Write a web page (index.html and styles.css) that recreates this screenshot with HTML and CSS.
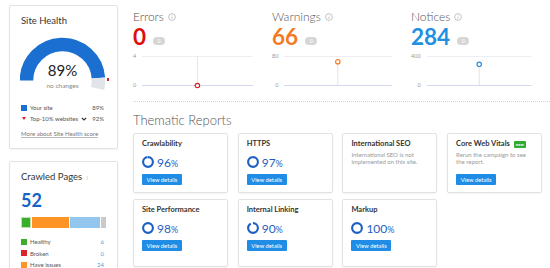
FILE: index.html
```html
<!DOCTYPE html>
<html lang="en">
<head>
  <meta charset="UTF-8" />
  <title>Site Audit Overview</title>
  <link rel="stylesheet" href="styles.css">
</head>
<body>
  <div class="page">
    <!-- Left column: health + crawled pages -->
    <aside class="side">
      <section class="panel health">
        <h2 class="panel-title">Site Health</h2>
        <div class="gauge">
          <svg class="gauge-svg" width="97" height="56">
            <path d="M 6.5 44.5 A 36 36 0 0 1 78.41 41.99" fill="none" stroke="#1a6fd0" stroke-width="13.5"/>
            <path d="M 78.41 41.99 A 36 36 0 0 1 77.58 52.6" fill="none" stroke="#e1e4e8" stroke-width="13.5"/>
            <rect x="87" y="42" width="2" height="3" fill="#e0202a"/>
          </svg>
          <div class="gauge-label">
            <div class="gauge-value">89%</div>
            <div class="gauge-note">no changes</div>
          </div>
        </div>
        <ul class="legend">
          <li><span class="swatch swatch-blue"></span><span>Your site</span><span class="legend-val">89%</span></li>
          <li>
            <span class="tri"></span><span>Top-10% websites</span>
            <svg class="chev" width="6" height="4" viewBox="0 0 6 4"><path d="M0.8 0.8 L3 3 L5.2 0.8" fill="none" stroke="#333" stroke-width="1.2"/></svg>
            <span class="legend-val">92%</span>
          </li>
        </ul>
        <a class="more-link" href="#">More about Site Health score</a>
      </section>

      <section class="panel crawled">
        <h2 class="panel-title">Crawled Pages <span class="tiny-i">i</span></h2>
        <div class="crawled-total">52</div>
        <div class="pages-bar">
          <span class="seg seg-green" style="width: 10px"></span>
          <span class="seg seg-orange" style="width: 38px"></span>
          <span class="seg seg-light" style="width: 30px"></span>
          <span class="seg seg-grey" style="width: 5px"></span>
        </div>
        <ul class="legend legend-pages">
          <li><span class="swatch swatch-green"></span><span>Healthy</span><span class="legend-val">6</span></li>
          <li><span class="swatch swatch-red"></span><span>Broken</span><span class="legend-val">0</span></li>
          <li><span class="swatch swatch-orange"></span><span>Have issues</span><span class="legend-val">24</span></li>
        </ul>
      </section>
    </aside>

    <!-- Main area -->
    <main class="main">
      <div class="stats">
        <div class="stat">
          <div class="stat-title">Errors
            <svg class="info" width="8" height="8" viewBox="0 0 8 8"><circle cx="4" cy="4" r="3.4" fill="none" stroke="#b5b5b5" stroke-width="0.8"/><path d="M4.1 3.5 L3.8 5.8" stroke="#b5b5b5" stroke-width="0.8"/><circle cx="4.2" cy="2.4" r="0.45" fill="#b5b5b5"/></svg>
          </div>
          <div class="stat-row">
            <span class="stat-num num-red">0</span><span class="delta">0</span>
          </div>
          <div class="chart">
            <div class="axis"><span>4</span><span>0</span></div>
            <svg class="plot" height="37">
              <line x1="0" x2="100%" y1="4.5" y2="4.5" stroke="#eceef3"/>
              <line x1="0" x2="100%" y1="33.5" y2="33.5" stroke="#d3d8ec"/>
              <line x1="50%" x2="50%" y1="4.5" y2="33.5" stroke="#e3e6f0"/>
              <circle cx="50%" cy="33.5" r="2.2" fill="#fff" stroke="#e0202a" stroke-width="1.2"/>
            </svg>
          </div>
        </div>
        <div class="stat">
          <div class="stat-title">Warnings
            <svg class="info" width="8" height="8" viewBox="0 0 8 8"><circle cx="4" cy="4" r="3.4" fill="none" stroke="#b5b5b5" stroke-width="0.8"/><path d="M4.1 3.5 L3.8 5.8" stroke="#b5b5b5" stroke-width="0.8"/><circle cx="4.2" cy="2.4" r="0.45" fill="#b5b5b5"/></svg>
          </div>
          <div class="stat-row">
            <span class="stat-num num-orange">66</span><span class="delta">0</span>
          </div>
          <div class="chart">
            <div class="axis"><span>80</span><span>0</span></div>
            <svg class="plot" height="37">
              <line x1="0" x2="100%" y1="4.5" y2="4.5" stroke="#eceef3"/>
              <line x1="0" x2="100%" y1="33.5" y2="33.5" stroke="#d3d8ec"/>
              <line x1="50%" x2="50%" y1="9.7" y2="33.5" stroke="#dfe3ef"/>
              <circle cx="50%" cy="9.7" r="2.2" fill="#fff" stroke="#f47a1f" stroke-width="1.2"/>
            </svg>
          </div>
        </div>
        <div class="stat">
          <div class="stat-title">Notices
            <svg class="info" width="8" height="8" viewBox="0 0 8 8"><circle cx="4" cy="4" r="3.4" fill="none" stroke="#b5b5b5" stroke-width="0.8"/><path d="M4.1 3.5 L3.8 5.8" stroke="#b5b5b5" stroke-width="0.8"/><circle cx="4.2" cy="2.4" r="0.45" fill="#b5b5b5"/></svg>
          </div>
          <div class="stat-row">
            <span class="stat-num num-blue">284</span><span class="delta">0</span>
          </div>
          <div class="chart">
            <div class="axis"><span>400</span><span>0</span></div>
            <svg class="plot" height="37">
              <line x1="0" x2="100%" y1="4.5" y2="4.5" stroke="#eceef3"/>
              <line x1="0" x2="100%" y1="33.5" y2="33.5" stroke="#d3d8ec"/>
              <line x1="50%" x2="50%" y1="12.3" y2="33.5" stroke="#dfe3ef"/>
              <circle cx="50%" cy="12.3" r="2.2" fill="#fff" stroke="#2a8de0" stroke-width="1.2"/>
            </svg>
          </div>
        </div>
      </div>

      <h2 class="section-title">Thematic Reports</h2>

      <div class="reports">
        <div class="report">
          <div class="report-title">Crawlability</div>
          <div class="score">
            <svg class="ring" width="12" height="12" viewBox="0 0 12 12"><circle cx="6" cy="6" r="4.9" fill="none" stroke="#1d5fc4" stroke-width="2.1" stroke-dasharray="29.56 30.79" transform="rotate(-90 6 6)"/></svg>
            <span class="score-num">96<small>%</small></span>
          </div>
          <a class="btn" href="#">View details</a>
        </div>
        <div class="report">
          <div class="report-title">HTTPS</div>
          <div class="score">
            <svg class="ring" width="12" height="12" viewBox="0 0 12 12"><circle cx="6" cy="6" r="4.9" fill="none" stroke="#1d5fc4" stroke-width="2.1" stroke-dasharray="29.87 30.79" transform="rotate(-90 6 6)"/></svg>
            <span class="score-num">97<small>%</small></span>
          </div>
          <a class="btn" href="#">View details</a>
        </div>
        <div class="report">
          <div class="report-title">International SEO</div>
          <p class="report-desc">International SEO is not implemented on this site.</p>
        </div>
        <div class="report">
          <div class="report-title">Core Web Vitals <span class="badge-new">new</span></div>
          <p class="report-desc">Rerun the campaign to see the report.</p>
          <a class="btn btn-cwv" href="#">View details</a>
        </div>
        <div class="report">
          <div class="report-title">Site Performance</div>
          <div class="score">
            <svg class="ring" width="12" height="12" viewBox="0 0 12 12"><circle cx="6" cy="6" r="4.9" fill="none" stroke="#1d5fc4" stroke-width="2.1" stroke-dasharray="30.17 30.79" transform="rotate(-90 6 6)"/></svg>
            <span class="score-num">98<small>%</small></span>
          </div>
          <a class="btn" href="#">View details</a>
        </div>
        <div class="report">
          <div class="report-title">Internal Linking</div>
          <div class="score">
            <svg class="ring" width="12" height="12" viewBox="0 0 12 12"><circle cx="6" cy="6" r="4.9" fill="none" stroke="#1d5fc4" stroke-width="2.1" stroke-dasharray="27.71 30.79" transform="rotate(-90 6 6)"/></svg>
            <span class="score-num">90<small>%</small></span>
          </div>
          <a class="btn" href="#">View details</a>
        </div>
        <div class="report">
          <div class="report-title">Markup</div>
          <div class="score">
            <svg class="ring" width="12" height="12" viewBox="0 0 12 12"><circle cx="6" cy="6" r="4.9" fill="none" stroke="#1d5fc4" stroke-width="2.1"/></svg>
            <span class="score-num">100<small>%</small></span>
          </div>
          <a class="btn" href="#">View details</a>
        </div>
      </div>
    </main>
  </div>
</body>
</html>
```

FILE: styles.css
```css
/* Base */
* { box-sizing: border-box; margin: 0; padding: 0; }
body {
  font-family: Lato, "Noto Sans", sans-serif;
  background: #fff;
  color: #333;
  overflow: hidden;
}
ul { list-style: none; }
a { color: inherit; }

.page {
  display: flex;
  gap: 15px;
  padding: 5px 0 0 9px;
}

/* Left column */
.side {
  width: 109px;
  flex: none;
  display: flex;
  flex-direction: column;
  gap: 12px;
}
.panel {
  background: #fff;
  border: 1px solid #e3e3e3;
  border-radius: 2px;
  box-shadow: 0 1px 2px rgba(0,0,0,0.05);
  padding: 9px 11px;
}
.panel-title {
  font-size: 9.5px;
  font-weight: 400;
  line-height: 12px;
  color: #333;
}
.tiny-i {
  font-size: 6px;
  font-style: italic;
  color: #c4c4c4;
  margin-left: 2px;
}

/* Gauge */
.gauge {
  position: relative;
  height: 56px;
  margin-top: 9px;
}
.gauge-svg {
  display: block;
  margin-left: -1px;
}
.gauge-label {
  position: absolute;
  left: 0;
  width: 83px;
  top: 26px;
  text-align: center;
}
.gauge-value {
  font-size: 15px;
  line-height: 16px;
  color: #222;
}
.gauge-note {
  font-size: 6.5px;
  line-height: 8px;
  color: #888;
  margin-top: 4px;
}

/* Legends */
.legend { margin-top: 10px; padding-right: 2px; }
.legend li {
  display: flex;
  align-items: center;
  height: 11px;
  font-size: 6px;
  color: #555;
}
.legend-val { margin-left: auto; }
.swatch {
  width: 6px;
  height: 6px;
  margin-right: 3px;
}
.swatch-blue { background: #1a6fd0; }
.swatch-green { background: #3aad2b; }
.swatch-red { background: #d9262b; }
.swatch-orange { background: #ff9426; }
.tri {
  width: 0;
  height: 0;
  border-left: 2px solid transparent;
  border-right: 2px solid transparent;
  border-top: 3px solid #e0202a;
  margin: 0 4px 0 1px;
}
.chev { margin-left: 3px; }
.more-link {
  display: block;
  margin-top: 4px;
  font-size: 6px;
  line-height: 11px;
  color: #777;
  text-decoration: underline;
  text-decoration-color: #bbb;
}

/* Crawled pages */
.crawled { padding-bottom: 20px; }
.crawled-total {
  font-size: 18px;
  line-height: 20px;
  font-weight: 700;
  color: #1664c5;
  margin-top: 6px;
}
.pages-bar {
  display: flex;
  gap: 1px;
  height: 11px;
  margin-top: 7px;
}
.seg { display: block; height: 100%; }
.seg-green { background: #3aad2b; border: 1px solid #bfe3b9; }
.seg-orange { background: #ff9426; }
.seg-light { background: #93c6ef; }
.seg-grey { background: #c9c9c9; }
.legend-pages { margin-top: 8px; }
.legend-pages li { height: 11.5px; }
.legend-pages .legend-val { color: #5b9bd5; }

/* Main */
.main {
  flex: 1;
  min-width: 0;
  padding-top: 5px;
}
.stats {
  display: grid;
  grid-template-columns: repeat(3, 139px);
  border-bottom: 1px dotted #d5d5d5;
  padding-bottom: 12px;
}
.stat-title {
  display: flex;
  align-items: center;
  gap: 4px;
  font-size: 12px;
  line-height: 13px;
  font-weight: 300;
  color: #555;
}
.stat-row {
  display: flex;
  align-items: flex-end;
  gap: 7px;
}
.stat-num {
  font-size: 22.5px;
  line-height: 27px;
  font-weight: 700;
}
.num-red { color: #dd1010; }
.num-orange { color: #f47a1f; }
.num-blue { color: #2190e3; }
.delta {
  background: #d6d6d6;
  color: #fff;
  font-size: 5px;
  line-height: 8px;
  width: 12px;
  text-align: center;
  border-radius: 4px;
  margin-bottom: 5px;
}
.chart {
  display: flex;
  gap: 6px;
  width: 120px;
  margin-top: 2px;
}
.axis {
  flex: none;
  display: flex;
  flex-direction: column;
  justify-content: space-between;
  text-align: right;
  font-size: 5.5px;
  line-height: 8px;
  color: #999;
  height: 37px;
}
.plot {
  display: block;
  flex: 1 1 0;
  width: 0;
  min-width: 0;
  overflow: visible;
}

.section-title {
  font-size: 13px;
  line-height: 16px;
  font-weight: 300;
  color: #555;
  margin-top: 10px;
}

/* Thematic report cards */
.reports {
  display: grid;
  grid-template-columns: repeat(4, 95px);
  grid-template-rows: 60px 68px;
  column-gap: 9.7px;
  row-gap: 6px;
  margin-top: 5px;
}
.report {
  border: 1px solid #e2e2e2;
  border-radius: 2px;
  box-shadow: 0 1px 2px rgba(0,0,0,0.05);
  padding: 5px 8px;
}
.report-title {
  display: flex;
  align-items: center;
  gap: 4px;
  font-size: 7.5px;
  line-height: 10px;
  font-weight: 700;
  color: #333;
}
.badge-new {
  background: #33a933;
  color: #fff;
  font-size: 4.5px;
  line-height: 7px;
  padding: 0 2px;
  border-radius: 1px;
  font-style: italic;
}
.score {
  display: flex;
  align-items: center;
  gap: 3px;
  height: 16px;
  margin-top: 5px;
}
.ring { display: block; }
.score-num {
  font-size: 12px;
  color: #1f5fc2;
}
.score-num small { font-size: 9px; }
.btn {
  display: block;
  width: 40px;
  height: 11px;
  margin-top: 4px;
  background: #1f8de6;
  color: #fff;
  font-size: 5.8px;
  line-height: 11px;
  text-align: center;
  text-decoration: none;
  border-radius: 1px;
}
.report-desc {
  font-size: 6px;
  line-height: 7px;
  color: #999;
  margin-top: 2px;
}
.btn-cwv { margin-top: 9px; }
```
